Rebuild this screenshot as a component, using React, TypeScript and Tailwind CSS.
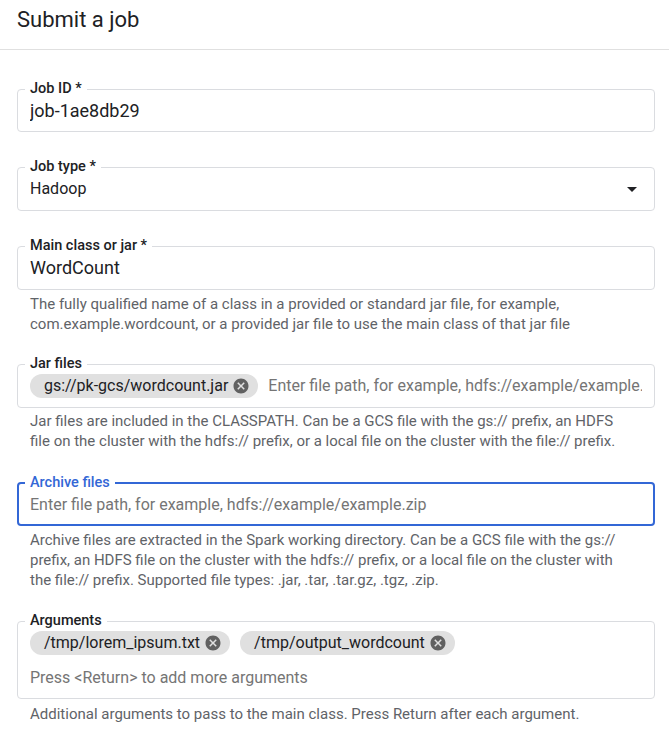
import { useState } from "react";

function CancelIcon() {
  return (
    <svg width="18" height="18" viewBox="0 0 24 24" className="shrink-0">
      <path
        fill="#616161"
        d="M12 2C6.47 2 2 6.47 2 12s4.47 10 10 10 10-4.47 10-10S17.53 2 12 2zm5 13.59L15.59 17 12 13.41 8.41 17 7 15.59 10.59 12 7 8.41 8.41 7 12 10.59 15.59 7 17 8.41 13.41 12 17 15.59z"
      />
    </svg>
  );
}

function Chip({ text }: { text: string }) {
  return (
    <div className="flex items-center h-[24px] rounded-full bg-[#e0e0e0] pl-[14px] pr-[8px] gap-[4px] text-[16px] leading-[24px] text-[#202124] whitespace-nowrap shrink-0">
      {text}
      <CancelIcon />
    </div>
  );
}

function Field({
  label,
  focused,
  pb = "pb-[9px]",
  children,
}: {
  label: string;
  focused?: boolean;
  pb?: string;
  children: React.ReactNode;
}) {
  return (
    <fieldset
      className={
        focused
          ? "rounded border-2 border-[#3367d6] px-[11px] pt-[2px] pb-[7px] min-w-0"
          : "rounded border border-[#dadce0] px-[12px] pt-[2px] min-w-0 " + pb
      }
    >
      <legend
        className={
          "-ml-[5px] px-[5px] text-[14.5px] leading-[16px] font-medium " +
          (focused ? "text-[#3367d6]" : "text-[#202124]")
        }
      >
        {label}
      </legend>
      {children}
    </fieldset>
  );
}

function Helper({ children, top = "mt-[4px]" }: { children: React.ReactNode; top?: string }) {
  return (
    <p className={top + " pl-[13px] pr-[30px] text-[15px] leading-[20px] text-[#5f6368]"}>
      {children}
    </p>
  );
}

export default function App() {
  const [jobId, setJobId] = useState("job-1ae8db29");
  const [mainClass, setMainClass] = useState("WordCount");
  const [jar, setJar] = useState("");
  const [archive, setArchive] = useState("");
  const [arg, setArg] = useState("");

  return (
    <div className="min-h-screen bg-white font-['Roboto',sans-serif] text-[#202124]">
      <div className="h-[50px] border-b border-[#e0e0e0] pl-[17px] pt-[6px] text-[22px] leading-[28px]">
        Submit a job
      </div>

      <div className="flex flex-col pl-[17px] pr-[14px] pt-[31px]">
        <Field label="Job ID *" pb="pb-[8px]">
          <input
            className="block w-full h-[24px] bg-transparent outline-none text-[18px] leading-[24px]"
            value={jobId}
            onChange={(e) => setJobId(e.target.value)}
          />
        </Field>

        <div className="mt-[27px]">
          <Field label="Job type *">
            <div className="flex items-center justify-between h-[24px] -mr-[2px]">
              <span className="text-[16px] leading-[24px]">Hadoop</span>
              <svg width="24" height="24" viewBox="0 0 24 24">
                <path d="M7 10l5 5 5-5z" fill="#202124" />
              </svg>
            </div>
          </Field>
        </div>

        <div className="mt-[27px]">
          <Field label="Main class or jar *">
            <input
              className="block w-full h-[24px] bg-transparent outline-none text-[18px] leading-[24px]"
              value={mainClass}
              onChange={(e) => setMainClass(e.target.value)}
            />
          </Field>
          <Helper>
            The fully qualified name of a class in a provided or standard jar file, for example,
            com.example.wordcount, or a provided jar file to use the main class of that jar file
          </Helper>
        </div>

        <div className="mt-[22px]">
          <Field label="Jar files">
            <div className="flex items-center h-[24px]">
              <Chip text="gs://pk-gcs/wordcount.jar" />
              <input
                className="ml-[10px] flex-1 min-w-0 bg-transparent outline-none text-[16px] leading-[24px] placeholder:text-[#757575]"
                placeholder="Enter file path, for example, hdfs://example/example.jar"
                value={jar}
                onChange={(e) => setJar(e.target.value)}
              />
            </div>
          </Field>
          <Helper top="mt-[3px]">
            Jar files are included in the CLASSPATH. Can be a GCS file with the gs:// prefix, an HDFS
            file on the cluster with the hdfs:// prefix, or a local file on the cluster with the
            file:// prefix.
          </Helper>
        </div>

        <div className="mt-[24px]">
          <Field label="Archive files" focused>
            <input
              className="block w-full h-[24px] bg-transparent outline-none text-[16px] leading-[24px] placeholder:text-[#757575]"
              placeholder="Enter file path, for example, hdfs://example/example.zip"
              value={archive}
              onChange={(e) => setArchive(e.target.value)}
            />
          </Field>
          <Helper>
            Archive files are extracted in the Spark working directory. Can be a GCS file with the
            gs:// prefix, an HDFS file on the cluster with the hdfs:// prefix, or a local file on the
            cluster with the file:// prefix. Supported file types: .jar, .tar, .tar.gz, .tgz, .zip.
          </Helper>
        </div>

        <div className="mt-[23px]">
          <Field label="Arguments" pb="pb-[8px]">
            <div className="flex items-center gap-[10px]">
              <Chip text="/tmp/lorem_ipsum.txt" />
              <Chip text="/tmp/output_wordcount" />
            </div>
            <input
              className="mt-[11px] block w-full h-[24px] bg-transparent outline-none text-[16px] leading-[24px] placeholder:text-[#757575]"
              placeholder="Press <Return> to add more arguments"
              value={arg}
              onChange={(e) => setArg(e.target.value)}
            />
          </Field>
          <Helper top="mt-[5px]">
            Additional arguments to pass to the main class. Press Return after each argument.
          </Helper>
        </div>
      </div>
    </div>
  );
}
